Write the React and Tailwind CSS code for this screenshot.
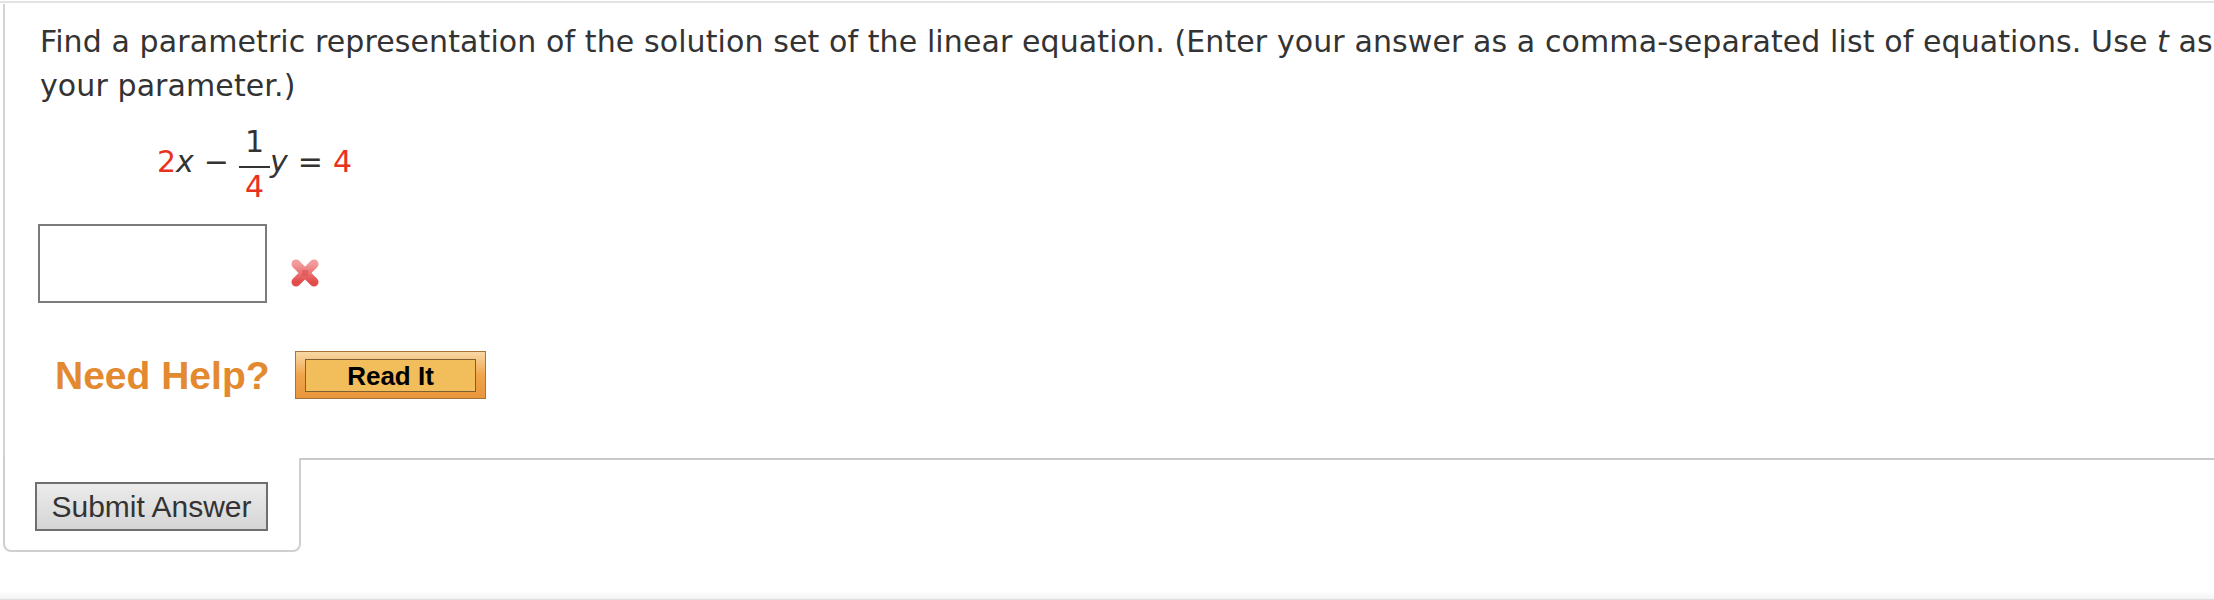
import React from "react";

const textFont = { fontFamily: '"DejaVu Sans", Verdana, sans-serif' };
const btnFont = { fontFamily: '"Liberation Sans", Arial, sans-serif' };

// red cross shown next to an answer box
const WrongMark = () => (
  <svg width="32" height="32" viewBox="0 0 32 32" className="shrink-0">
    <defs>
      <linearGradient id="xg" x1="0" y1="0" x2="0" y2="1">
        <stop offset="0" stopColor="#f39a9a" />
        <stop offset="1" stopColor="#e14c4c" />
      </linearGradient>
    </defs>
    <line x1="7" y1="7" x2="25" y2="25" stroke="url(#xg)" strokeWidth="9" strokeLinecap="round" />
    <line x1="25" y1="7" x2="7" y2="25" stroke="url(#xg)" strokeWidth="9" strokeLinecap="round" />
    <rect x="13" y="13" width="6" height="6" fill="#e05050" opacity="0.6" />
  </svg>
);

const Equation = () => (
  <div className="flex items-center ml-[119px] text-[30px] leading-none text-[#333]" style={textFont}>
    <span className="text-[#e8321f]">2</span>
    <span className="italic">x</span>
    <span className="mx-[10px]">&minus;</span>
    <div className="flex flex-col items-center mt-[6px]">
      <span className="pb-[9px]">1</span>
      <span className="w-[31px] h-[2px] bg-[#333]" />
      <span className="pt-[4px] text-[#e8321f]">4</span>
    </div>
    <span className="italic">y</span>
    <span className="mx-[10px]">=</span>
    <span className="text-[#e8321f]">4</span>
  </div>
);

export default function App() {
  return (
    <div className="w-full h-[600px] bg-white overflow-hidden flex flex-col">
      <div className="mt-[1px] h-[2px] bg-[#e3e3e3]" />

      <div className="ml-[3px] mt-[1px] flex flex-col">
        {/* question body */}
        <div className="border-l-2 border-[#d3d3d3] pl-[33px] pt-[16px] h-[454px] flex flex-col">
          <p
            className="pl-[2px] text-[30px] leading-[44px] tracking-[0.1px] text-[#333] whitespace-nowrap"
            style={textFont}
          >
            Find a parametric representation of the solution set of the linear equation. (Enter your answer as a
            comma-separated list of equations. Use <i>t</i> as
            <br />
            your parameter.)
          </p>

          <div className="mt-[13px]">
            <Equation />
          </div>

          <div className="mt-[22px] flex items-start">
            <input
              type="text"
              className="w-[229px] h-[79px] border-2 border-[#7b7b7b] bg-white outline-none"
            />
            <div className="ml-[22px] mt-[33px]">
              <WrongMark />
            </div>
          </div>

          <div className="mt-[48px] flex items-center">
            <span
              className="ml-[17px] w-[240px] text-[39px] leading-none font-bold text-[#e3892f]"
              style={btnFont}
            >
              Need Help?
            </span>
            <button className="w-[191px] h-[48px] border border-[#a8733a] bg-gradient-to-b from-[#f8d8a4] via-[#f0a54a] to-[#e8963c] pt-[7px] pb-[6px] px-[9px] flex">
              <span
                className="flex-1 flex items-center justify-center border border-[#7d6134] bg-[#f2bd5b] text-[26px] font-bold leading-none text-black"
                style={btnFont}
              >
                Read It
              </span>
            </button>
          </div>
        </div>

        {/* submit tab */}
        <div className="flex">
          <div className="w-[298px] h-[94px] border-l-2 border-r-2 border-b-2 border-[#cfcfcf] rounded-b-[8px] pl-[30px] pt-[24px]">
            <button
              className="w-[233px] h-[49px] border-2 border-[#6f6f6f] bg-gradient-to-b from-[#ececec] to-[#d5d5d5] text-[30px] leading-none text-[#333]"
              style={btnFont}
            >
              Submit Answer
            </button>
          </div>
          <div className="flex-1 border-t-2 border-[#c9c9c9]" />
        </div>
      </div>

      <div className="mt-auto h-[9px] bg-gradient-to-b from-white to-[#f3f3f3] border-b border-[#dedede]" />
    </div>
  );
}
